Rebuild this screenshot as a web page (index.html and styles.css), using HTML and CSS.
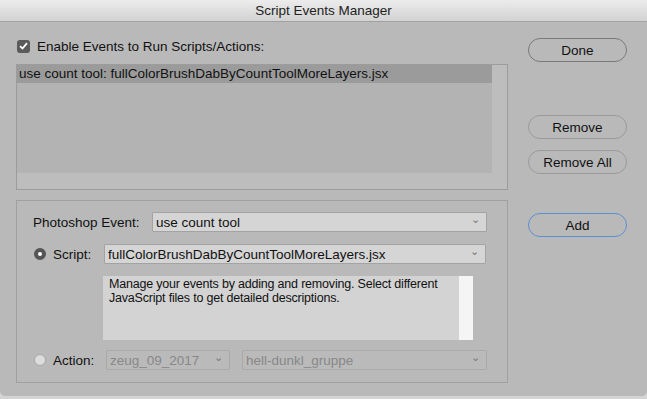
FILE: index.html
```html
<!DOCTYPE html>
<html lang="en">
<head>
    <meta charset="UTF-8">
    <title>Script Events Manager</title>
    <link rel="stylesheet" href="styles.css">
</head>
<body>
    <div class="window">
        <div class="titlebar">Script Events Manager</div>
        <div class="content">
            <div class="main">
                <label class="enable">
                    <span class="check">
                        <svg width="9" height="8" viewBox="0 0 9 8"><path d="M1 4.2 L3.5 6.5 L8 1.2" fill="none" stroke="#fff" stroke-width="1.8"/></svg>
                    </span>
                    Enable Events to Run Scripts/Actions:
                </label>

                <!-- liste der events -->
                <div class="list">
                    <div class="list-inner">
                        <div class="row selected">use count tool: fullColorBrushDabByCountToolMoreLayers.jsx</div>
                    </div>
                </div>

                <div class="group">
                    <div class="line">
                        <span class="label event-label">Photoshop Event:</span>
                        <div class="select event-select">use count tool<span class="chev">&#8964;</span></div>
                    </div>
                    <div class="line">
                        <span class="radio on"></span>
                        <span class="label radio-label">Script:</span>
                        <div class="select script-select">fullColorBrushDabByCountToolMoreLayers.jsx<span class="chev">&#8964;</span></div>
                    </div>
                    <div class="desc">
                        <div class="desc-text">Manage your events by adding and removing. Select different<br>JavaScript files to get detailed descriptions.</div>
                        <div class="desc-bar"></div>
                    </div>
                    <div class="line action-line">
                        <span class="radio"></span>
                        <span class="label radio-label">Action:</span>
                        <div class="select disabled set-select">zeug_09_2017<span class="chev">&#8964;</span></div>
                        <div class="select disabled action-select">hell-dunkl_gruppe<span class="chev">&#8964;</span></div>
                    </div>
                </div>
            </div>

            <div class="side">
                <button class="btn done">Done</button>
                <button class="btn remove">Remove</button>
                <button class="btn">Remove All</button>
                <button class="btn add">Add</button>
            </div>
        </div>
    </div>
</body>
</html>
```

FILE: styles.css
```css
body {
    margin: 0;
    background: #d4d4d4;
    font-family: "Liberation Sans", Arial, sans-serif;
    font-size: 13.5px;
    color: #111;
}
.window {
    width: 647px;
    height: 396px;
    background: #b9b9b9;
    border-radius: 0 0 5px 5px;
    overflow: hidden;
}
.titlebar {
    height: 21px;
    line-height: 22px;
    text-align: center;
    background: linear-gradient(#ececec, #d2d2d2);
    border-bottom: 1px solid #a2a2a2;
    color: #222;
}
.content {
    display: flex;
    padding-left: 16px;
}
.main {
    width: 492px;
}
.enable {
    display: flex;
    align-items: center;
    height: 16px;
    margin-top: 16px;
    margin-left: 1px;
}
.check {
    width: 13px;
    height: 13px;
    border-radius: 3px;
    background: #5a5a5a;
    display: flex;
    align-items: center;
    justify-content: center;
    margin-right: 7px;
}
.list {
    margin-top: 10px;
    height: 124px;
    border: 1px solid #9c9c9c;
    background: #bdbdbd;
}
.list-inner {
    width: 475px;
    height: 108px;
    background: #b3b3b3;
}
.row {
    height: 18px;
    line-height: 18px;
    padding-left: 2px;
}
.selected {
    background: #9b9b9b;
}
.group {
    margin-top: 10px;
    border: 1px solid #a0a0a0;
    padding: 11px 19px 0 16px;
    box-sizing: border-box;
    height: 183px;
}
.line {
    display: flex;
    align-items: center;
    height: 20px;
}
.event-label {
    width: 119px;
}
.select {
    position: relative;
    height: 20px;
    line-height: 20px;
    box-sizing: border-box;
    border: 1px solid #a3a3a3;
    background: #d5d5d5;
    padding-left: 3px;
    border-radius: 1px;
}
.chev {
    position: absolute;
    right: 6px;
    top: -4px;
    font-size: 11px;
    color: #777;
}
.event-select {
    width: 335px;
}
.line + .line {
    margin-top: 12px;
}
.radio {
    width: 12px;
    height: 12px;
    border-radius: 50%;
    background: #dcdcdc;
    border: 1px solid #a8a8a8;
    box-sizing: border-box;
    margin-left: 1px;
    margin-right: 7px;
}
.radio.on {
    background: #fff;
    border: 4px solid #555;
}
.radio-label {
    width: 51px;
}
.script-select {
    width: 382px;
}
.desc {
    display: flex;
    margin: 12px 0 0 70px;
    width: 370px;
    height: 64px;
    background: #d3d3d3;
}
.desc-text {
    flex: 1;
    font-size: 12.5px;
    letter-spacing: -0.2px;
    line-height: 14px;
    padding: 1px 0 0 6px;
    white-space: nowrap;
}
.desc-bar {
    width: 14px;
    background: #f5f5f5;
}
.action-line {
    margin-top: 10px;
}
.action-line .radio-label {
    width: 53px;
}
.disabled {
    background: #bababa;
    border-color: #a9a9a9;
    color: #888;
}
.set-select {
    width: 124px;
    margin-right: 12px;
}
.action-select {
    width: 245px;
}
.side {
    display: flex;
    flex-direction: column;
    margin-left: 20px;
}
.btn {
    width: 99px;
    height: 24px;
    border: 1px solid #9a9a9a;
    border-radius: 12px;
    background: transparent;
    font-family: "Liberation Sans", Arial, sans-serif;
    font-size: 13.5px;
    color: #111;
    padding: 0;
    margin-top: 11px;
}
.done {
    margin-top: 16px;
    border-color: #7a7a7a;
}
.remove {
    margin-top: 53px;
}
.add {
    margin-top: 39px;
    border-color: #5a8fd6;
}
```
